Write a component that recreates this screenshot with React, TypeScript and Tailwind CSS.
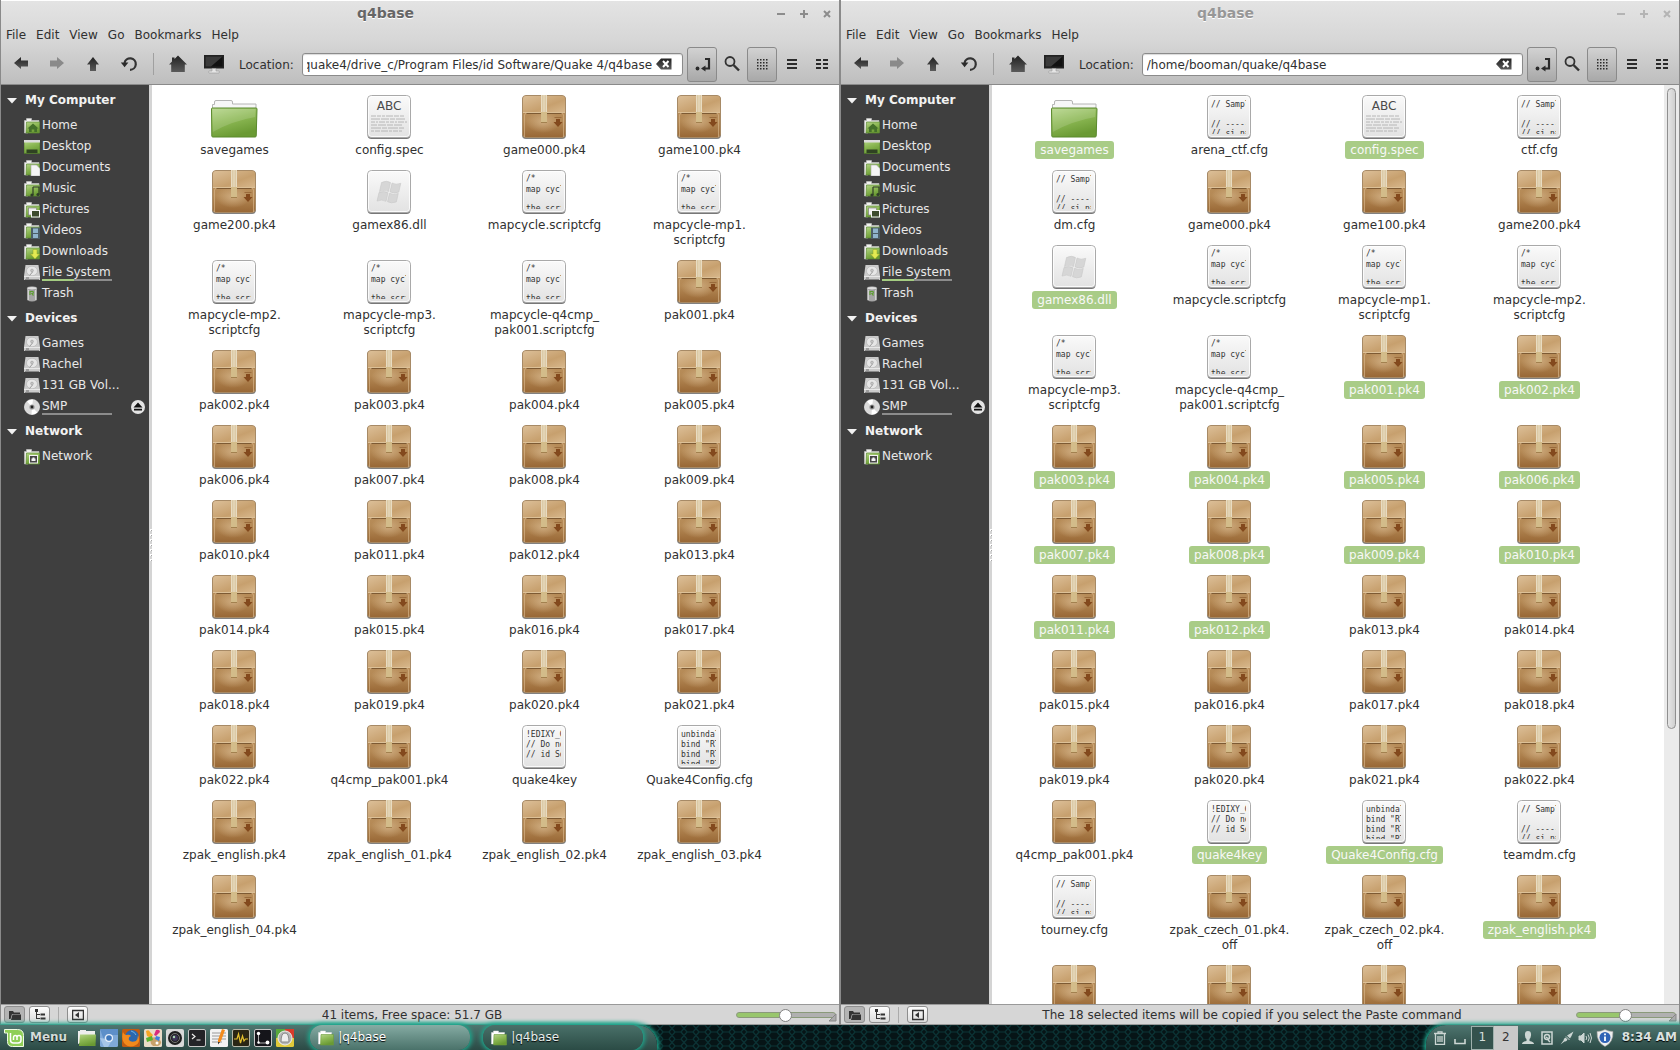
import { useId, type ReactNode } from "react";

type Kind = "pk4" | "folder" | "spec" | "dll" | "map" | "cfg" | "key" | "qcfg";
type FileItem = { name: string; kind: Kind; selected?: boolean };

const pk4 = (name: string, selected = false): FileItem => ({ name, kind: "pk4", selected });
const f = (name: string, kind: Kind, selected = false): FileItem => ({ name, kind, selected });

const leftFiles: FileItem[] = [
  f("savegames", "folder"), f("config.spec", "spec"), pk4("game000.pk4"), pk4("game100.pk4"),
  pk4("game200.pk4"), f("gamex86.dll", "dll"), f("mapcycle.scriptcfg", "map"), f("mapcycle-mp1.\nscriptcfg", "map"),
  f("mapcycle-mp2.\nscriptcfg", "map"), f("mapcycle-mp3.\nscriptcfg", "map"), f("mapcycle-q4cmp_\npak001.scriptcfg", "map"), pk4("pak001.pk4"),
  pk4("pak002.pk4"), pk4("pak003.pk4"), pk4("pak004.pk4"), pk4("pak005.pk4"),
  pk4("pak006.pk4"), pk4("pak007.pk4"), pk4("pak008.pk4"), pk4("pak009.pk4"),
  pk4("pak010.pk4"), pk4("pak011.pk4"), pk4("pak012.pk4"), pk4("pak013.pk4"),
  pk4("pak014.pk4"), pk4("pak015.pk4"), pk4("pak016.pk4"), pk4("pak017.pk4"),
  pk4("pak018.pk4"), pk4("pak019.pk4"), pk4("pak020.pk4"), pk4("pak021.pk4"),
  pk4("pak022.pk4"), pk4("q4cmp_pak001.pk4"), f("quake4key", "key"), f("Quake4Config.cfg", "qcfg"),
  pk4("zpak_english.pk4"), pk4("zpak_english_01.pk4"), pk4("zpak_english_02.pk4"), pk4("zpak_english_03.pk4"),
  pk4("zpak_english_04.pk4"),
];

const rightFiles: FileItem[] = [
  f("savegames", "folder", true), f("arena_ctf.cfg", "cfg"), f("config.spec", "spec", true), f("ctf.cfg", "cfg"),
  f("dm.cfg", "cfg"), pk4("game000.pk4"), pk4("game100.pk4"), pk4("game200.pk4"),
  f("gamex86.dll", "dll", true), f("mapcycle.scriptcfg", "map"), f("mapcycle-mp1.\nscriptcfg", "map"), f("mapcycle-mp2.\nscriptcfg", "map"),
  f("mapcycle-mp3.\nscriptcfg", "map"), f("mapcycle-q4cmp_\npak001.scriptcfg", "map"), pk4("pak001.pk4", true), pk4("pak002.pk4", true),
  pk4("pak003.pk4", true), pk4("pak004.pk4", true), pk4("pak005.pk4", true), pk4("pak006.pk4", true),
  pk4("pak007.pk4", true), pk4("pak008.pk4", true), pk4("pak009.pk4", true), pk4("pak010.pk4", true),
  pk4("pak011.pk4", true), pk4("pak012.pk4", true), pk4("pak013.pk4"), pk4("pak014.pk4"),
  pk4("pak015.pk4"), pk4("pak016.pk4"), pk4("pak017.pk4"), pk4("pak018.pk4"),
  pk4("pak019.pk4"), pk4("pak020.pk4"), pk4("pak021.pk4"), pk4("pak022.pk4"),
  pk4("q4cmp_pak001.pk4"), f("quake4key", "key", true), f("Quake4Config.cfg", "qcfg", true), f("teamdm.cfg", "cfg"),
  f("tourney.cfg", "cfg"), pk4("zpak_czech_01.pk4.\noff"), pk4("zpak_czech_02.pk4.\noff"), pk4("zpak_english.pk4", true),
  pk4("zpak_english_01.pk4"), pk4("zpak_english_02.pk4"), pk4("zpak_english_03.pk4"), pk4("zpak_english_04.pk4"),
];

/* ---------- file icons ---------- */

function PackageIcon() {
  return (
    <svg className="mr-px block h-11 w-11 shrink-0" viewBox="0 0 44 44" aria-hidden="true">
      <use href="#box" />
    </svg>
  );
}

function FolderIcon() {
  return (
    <svg className="mr-px block h-11 w-11 shrink-0 overflow-visible" viewBox="0 0 44 44" aria-hidden="true">
      <path d="M.5 40V9.500h2V7q0-1.500 1.500-1.500h15q1.500 0 1.500 1.500v2H44V40Z" fill="#f7f7f7" stroke="#b5b5b5" />
      <path d="M-.5 14q0-1 1-1h43.500q1 0 1 1l-.8 27q-.1 1-1 1H.8q-1 0-1-1Z" fill="url(#folderG)" stroke="#5b8a2d" />
      <path d="M.5 14h43l-.3 8Q20 26 .8 37Z" fill="#fff" opacity=".14" />
    </svg>
  );
}

function SheetIcon({ children }: { children?: ReactNode }) {
  return (
    <svg className="mr-px block h-11 w-11 shrink-0" viewBox="0 0 44 44" aria-hidden="true">
      <rect x=".5" y="1.500" width="43" height="42.500" rx="4" fill="#555" opacity=".8" />
      <rect x=".5" y=".5" width="43" height="42" rx="4" fill="url(#sheetG)" stroke="#a9a9a9" />
      <rect x="1.500" y="1.500" width="41" height="40" rx="3" fill="none" stroke="#fff" opacity=".8" />
      {children}
    </svg>
  );
}

const previews: Record<string, { text: string; y: number }[]> = {
  map: [{ text: "/*", y: 11 }, { text: "map cycle", y: 22 }, { text: "the scri", y: 41 }],
  cfg: [{ text: "// Sample", y: 12 }, { text: "// -----", y: 32 }, { text: "// si_nam", y: 41 }],
  key: [{ text: "!EDIXY_G", y: 12 }, { text: "// Do not", y: 22 }, { text: "// id Sof", y: 32 }],
  qcfg: [{ text: "unbindall", y: 12 }, { text: 'bind "RT', y: 22 }, { text: 'bind "RT', y: 32 }, { text: 'bind "RT', y: 42 }],
};

function PreviewIcon({ kind }: { kind: string }) {
  return (
    <SheetIcon>
      <g clipPath="url(#previewClip)" fontFamily="DejaVu Sans Mono" fontSize="8" fill="#333">
        {previews[kind].map((l) => (
          <text key={l.y} x="4" y={l.y}>{l.text}</text>
        ))}
      </g>
    </SheetIcon>
  );
}

function FileIcon({ kind }: { kind: Kind }) {
  if (kind === "pk4") return <PackageIcon />;
  if (kind === "folder") return <FolderIcon />;
  if (kind === "spec")
    return (
      <SheetIcon>
        <text x="22" y="15" textAnchor="middle" fontFamily="DejaVu Sans" fontSize="12" fill="#4a4a4a">ABC</text>
        <g stroke="#a8a8a8" strokeWidth=".8">
          <path d="M4 21h34" strokeDasharray="5 1 4 1 3 1 7 1" />
          <path d="M4 24h34" strokeDasharray="9 1 8 1 5 1" />
          <path d="M4 27h36" strokeDasharray="4 1 2 1 6 1 3 1" />
          <path d="M4 30h32" strokeDasharray="6 1 8 1" />
          <path d="M4 33h33" strokeDasharray="10 1 5 1" />
          <path d="M4 36h31" strokeDasharray="3 1 5 1 7 1" />
        </g>
      </SheetIcon>
    );
  if (kind === "dll")
    return (
      <SheetIcon>
        <g fill="#d6d6d6" stroke="#c3c3c3" strokeWidth=".5">
          <path d="M14.500 12.500q5-2.500 9 0l-2 9q-4-2.300-9 0Z" />
          <path d="M25 13q4 2.200 8.800.3l-2 8.800q-5 2-8.800-.3Z" />
          <path d="M12 22.500q5-2 9 .3l-2 8.500q-4-2.300-9-.2Z" />
          <path d="M22.500 23.300q4 2.200 8.800.2l-2 8.500q-5 1.800-8.800-.3Z" />
        </g>
      </SheetIcon>
    );
  return <PreviewIcon kind={kind} />;
}

function SharedDefs() {
  return (
    <svg className="absolute h-0 w-0" aria-hidden="true">
      <defs>
        <linearGradient id="boxTop" x1="0" y1="0" x2="1" y2="1">
          <stop offset="0" stopColor="#dcbf98" /><stop offset=".6" stopColor="#c7a06e" /><stop offset="1" stopColor="#d8b88d" />
        </linearGradient>
        <linearGradient id="boxFront" x1="0" y1="0" x2="0" y2="1">
          <stop offset="0" stopColor="#b98f5e" /><stop offset=".6" stopColor="#b58a56" /><stop offset="1" stopColor="#986735" />
        </linearGradient>
        <radialGradient id="boxGlow"><stop offset="0" stopColor="#d6b68c" stopOpacity=".75" /><stop offset="1" stopColor="#d6b68c" stopOpacity="0" /></radialGradient>
        <linearGradient id="folderG" x1="0" y1="0" x2=".4" y2="1">
          <stop offset="0" stopColor="#b4d488" /><stop offset=".5" stopColor="#8cb854" /><stop offset="1" stopColor="#6a9a33" />
        </linearGradient>
        <linearGradient id="sheetG" x1="0" y1="0" x2="0" y2="1"><stop offset="0" stopColor="#fafafa" /><stop offset="1" stopColor="#e2e2e2" /></linearGradient>
        <linearGradient id="darkG" x1="0" y1="0" x2="0" y2="1"><stop offset="0" stopColor="#222" /><stop offset="1" stopColor="#5a5a5a" /></linearGradient>
        <clipPath id="previewClip"><rect x="3" y="3" width="36" height="36" /></clipPath>
        <g id="box">
          <rect x="0" y="1" width="44" height="43" rx="4" fill="#6b6b6b" opacity=".85" />
          <rect x=".5" y=".5" width="43" height="42" rx="3.500" fill="url(#boxFront)" stroke="#a78a66" />
          <ellipse cx="21" cy="27" rx="17" ry="11" fill="url(#boxGlow)" />
          <path d="M1 17.500V4q0-3 3-3h36q3 0 3 3v13.500Z" fill="url(#boxTop)" />
          <path d="M1 17.500h42" stroke="#dcc097" />
          <path d="M4 18.500h36" stroke="#7d5a33" />
          <path d="M2.500 42V20q0-1.500 2-1.500M41.500 42V20q0-1.500-2-1.500" stroke="#d6b487" fill="none" opacity=".7" />
          <path d="M19 0h6v18h-6Z" fill="#dccaa6" /><path d="M19.500 0v17M24.500 0v17M22 0v17" stroke="#eee4cf" opacity=".7" />
          <path d="M19 17h6v10h-6Z" fill="#d3bc8a" /><path d="M19 27.500h6" stroke="#a3814f" />
          <path d="M34 24h4v3h2.500L36 32l-4.500-5H34Z" fill="#83491d" /><path d="M32.500 22.500h7" stroke="#9a6b3c" />
        </g>
      </defs>
    </svg>
  );
}

/* ---------- sidebar ---------- */

function MiniFolder({ children }: { children?: ReactNode }) {
  return (
    <svg className="h-4 w-4 shrink-0" viewBox="0 0 16 16" aria-hidden="true">
      <path d="M.5 15V2.500h2v-2h5v2h7.500V6H4v9Z" fill="#f1f1ee" stroke="#c8c8c8" strokeWidth=".6" />
      <path d="M2.500 4h13.200v10.500q0 .5-.5.5H2Z" fill="url(#folderG)" stroke="#5c8a34" strokeWidth=".7" />
      {children}
    </svg>
  );
}

const disk = (
  <svg className="h-4 w-4 shrink-0" viewBox="0 0 16 16" aria-hidden="true">
    <path d="M1.500 0h13L16 11v4H0v-4Z" fill="#cbcbcb" />
    <ellipse cx="8" cy="6" rx="5.500" ry="4.800" fill="#e6e6e6" stroke="#b0b0b0" strokeWidth=".6" />
    <circle cx="8" cy="5.500" r="1.400" fill="#c4c4c4" stroke="#999" strokeWidth=".5" />
    <path d="M8.500 7l-3 3.500" stroke="#9a9a9a" />
    <path d="M0 11.500h16" stroke="#efefef" strokeWidth=".8" />
    <path d="M1 14.500h14" stroke="#777" strokeWidth=".8" /><path d="M2 13h3" stroke="#555" strokeWidth=".8" />
  </svg>
);

const sidebarIcons: Record<string, ReactNode> = {
  Home: <MiniFolder><path d="M9 5.500l5.500 5H13V14h-2.700v-2.500H7.700V14H5v-3.500H3.500Z" fill="#43702a" /></MiniFolder>,
  Desktop: (
    <svg className="h-4 w-4 shrink-0" viewBox="0 0 16 16" aria-hidden="true">
      <path d="M0 1.500h16v13H0Z" fill="url(#folderG)" stroke="#4d752d" strokeWidth=".7" />
      <path d="M0 1h16v2.500H0Z" fill="#dcdcdc" /><path d="M2.500 10.500h11V14h-11Z" fill="#2f4222" />
    </svg>
  ),
  Documents: <MiniFolder><path d="M7 5h5.500L16 8.500V16H7Z" fill="#f5f5f5" stroke="#aaa" strokeWidth=".6" /></MiniFolder>,
  Music: <MiniFolder><path d="M9 6h6v7.500M9 6v8" stroke="#2f3d28" strokeWidth="1.200" fill="none" /><circle cx="8" cy="14" r="1.600" fill="#2f3d28" /><circle cx="14" cy="13.500" r="1.600" fill="#2f3d28" /></MiniFolder>,
  Pictures: <MiniFolder><rect x="4.500" y="6" width="8" height="7" fill="#eee" stroke="#777" strokeWidth=".6" /><rect x="7.500" y="8.500" width="8" height="6.500" fill="#3b4a2c" stroke="#f4f4f4" /></MiniFolder>,
  Videos: <MiniFolder><path d="M7 4.500h9V16H7Z" fill="#4b5d66" /><path d="M9 5.500h5V10H9ZM9 11h5v4H9Z" fill="#8fb4cb" /></MiniFolder>,
  Downloads: <MiniFolder><path d="M9 5.500h4V10h2.500L11 15 6.500 10H9Z" fill="#e2ea52" stroke="#93a424" strokeWidth=".5" /></MiniFolder>,
  "File System": disk,
  Trash: (
    <svg className="h-4 w-4 shrink-0" viewBox="0 0 16 16" aria-hidden="true">
      <path d="M3 2h10v12q-5 3-10 0Z" fill="#a5a5a5" /><path d="M4.500 3v11M11.500 3v11" stroke="#d2d2d2" />
      <ellipse cx="8" cy="2.200" rx="5" ry="1.700" fill="#ddd" stroke="#777" strokeWidth=".5" />
      <path d="M6 9V5.500h3q1 1.800-1 2.200l1.500 1.800" stroke="#5d9c2f" fill="none" strokeWidth="1.200" />
    </svg>
  ),
  SMP: (
    <svg className="h-4 w-4 shrink-0" viewBox="0 0 16 16" aria-hidden="true">
      <circle cx="8" cy="8" r="7.600" fill="#dadada" stroke="#f6f6f6" strokeWidth=".6" />
      <path d="M8 8 3 2.500Q6 .2 9 .8ZM8 8l5.500 5.500Q11 15.500 7.500 15.500Z" fill="#fff" />
      <circle cx="8" cy="8" r="2.600" fill="#999" /><circle cx="8" cy="8" r="1.400" fill="#222" />
    </svg>
  ),
  Network: <MiniFolder><rect x="5.500" y="6.500" width="8" height="7.500" fill="#444" stroke="#f3f3f3" /><path d="M7.500 12V9.500h1v-1h2v1h1V12Z" fill="#f3f3f3" /></MiniFolder>,
};

const sections: { title: string; items: { label: string; usage?: number; eject?: boolean }[] }[] = [
  {
    title: "My Computer",
    items: [
      { label: "Home" }, { label: "Desktop" }, { label: "Documents" }, { label: "Music" }, { label: "Pictures" },
      { label: "Videos" }, { label: "Downloads" }, { label: "File System", usage: 45 }, { label: "Trash" },
    ],
  },
  { title: "Devices", items: [{ label: "Games" }, { label: "Rachel" }, { label: "131 GB Vol..." }, { label: "SMP", usage: 0, eject: true }] },
  { title: "Network", items: [{ label: "Network" }] },
];

function Sidebar() {
  return (
    <nav className="w-37 shrink-0 overflow-hidden bg-[#3f3f3f] pt-px text-[#e8e8e8]" aria-label="Places">
      {sections.map((s) => (
        <section key={s.title}>
          <h2 className="flex h-[29px] items-center pl-1.5 font-bold text-[#f2f2f2]">
            <svg className="mr-2 h-[6px] w-2.5" viewBox="0 0 10 6" aria-hidden="true"><path d="M0 0h10L5 5.500Z" fill="#f2f2f2" /></svg>
            {s.title}
          </h2>
          <ul>
            {s.items.map((it) => (
              <li key={it.label} className="flex h-[21px] items-center pr-1 pl-[23px]">
                {sidebarIcons[it.label] ?? disk}
                <a href="#" className="relative ml-0.5 flex h-[21px] w-[70px] items-center whitespace-nowrap">
                  {it.label}
                  {it.usage !== undefined && (
                    <span className="absolute bottom-0.5 left-0 h-0.5 w-full bg-[#8c8c8c]">
                      <span className="block h-full bg-[#a5cd82]" style={{ width: `${it.usage}%` }} />
                    </span>
                  )}
                </a>
                {it.eject && (
                  <button type="button" aria-label="Eject" className="ml-auto">
                    <svg className="block h-3.5 w-3.5" viewBox="0 0 14 14" aria-hidden="true">
                      <circle cx="7" cy="7" r="7" fill="#e4e4e4" /><path d="M7 2.500 11.500 7.500h-9ZM3 8.700h8v1.900H3Z" fill="#111" />
                    </svg>
                  </button>
                )}
              </li>
            ))}
          </ul>
        </section>
      ))}
    </nav>
  );
}

/* ---------- window chrome ---------- */

function Tool({ label, children, wide, pressed }: { label: string; children: ReactNode; wide?: boolean; pressed?: boolean }) {
  return (
    <button
      type="button"
      aria-label={label}
      className={`flex h-[35px] shrink-0 items-center justify-center rounded-[3px] ${wide ? "w-9" : "w-[30px]"} ${
        pressed ? "border border-[#8a8a8a] bg-linear-to-b from-[#d2d2d2] to-[#a8a8a8]" : ""
      }`}
    >
      {children}
    </button>
  );
}

function Glyph({ children }: { children: ReactNode }) {
  return <svg className="block h-5 w-5 shrink-0" viewBox="0 0 20 20" fill="#2b2b2b" aria-hidden="true">{children}</svg>;
}

const dots = [5, 8, 11, 14].flatMap((y) => [5, 8, 11, 14].map((x) => `M${x} ${y}h1.500v1.500h-1.500Z`)).join("");

const scrollToEnd = (el: HTMLInputElement | null) => {
  if (el) el.scrollLeft = el.scrollWidth;
};

function Toolbar({ path }: { path: string }) {
  const id = useId();
  return (
    <div className="flex h-[38px] items-center px-0.5">
      <Tool label="Back" wide><Glyph><path d="M3 9 10 3v3.500h7v6h-7V15Z" fill="url(#darkG)" /></Glyph></Tool>
      <Tool label="Forward" wide><Glyph><path d="M17 9 10 3v3.500H3v6h7V15Z" fill="#8a8a8a" /></Glyph></Tool>
      <Tool label="Up" wide><Glyph><path d="M10 3l6 7.500h-3V17H7v-6.500H4Z" fill="url(#darkG)" /></Glyph></Tool>
      <Tool label="Reload" wide><Glyph><path d="M5.500 9A5.700 5.700 0 1 1 11 15.800" fill="none" stroke="#333" strokeWidth="2.200" /><path d="M1.800 8.500h7.600L5.600 13.300Z" /></Glyph></Tool>
      <span className="mx-1.5 h-[22px] w-px bg-[#a0a0a0]" />
      <Tool label="Home" wide><Glyph><path d="M10 1.500 19 10.500h-2.200V18H3.200v-7.500H1L4 7.600V3.500h2.500v1.600Z" fill="url(#darkG)" /></Glyph></Tool>
      <Tool label="Computer" wide>
        <Glyph><path d="M0 1h20v13.500H0Z" fill="#222" /><path d="M1.500 2.500h17v10h-17Z" fill="#111" /><path d="M1.500 2.500h17L7 12.500H1.500Z" fill="#3a3a3a" /><path d="M8 14.500h4v2.500h3q1 1 0 2H5q-1-1 0-2h3Z" fill="#e5e5e5" stroke="#999" strokeWidth=".6" /></Glyph>
      </Tool>
      <label htmlFor={id} className="ml-[7px] shrink-0 pt-0.5">Location:</label>
      <div className="ml-2 flex h-[23px] min-w-0 flex-1 items-center rounded-[3px] border border-[#8b8b8b] bg-white pr-2.5 pl-1 shadow-[inset_0_1px_1px_rgba(0,0,0,0.15)]">
        <input
          id={id}
          ref={scrollToEnd}
          readOnly
          value={path}
          className="h-full min-w-0 flex-1 bg-transparent pt-0.5 text-[#303030] outline-none"
        />
        <button type="button" aria-label="Clear location" className="ml-1">
          <svg className="block h-3 w-4" viewBox="0 0 16 12" aria-hidden="true">
            <path d="M0 6 5 .5h10.500v11H5Z" fill="url(#darkG)" /><path d="m7 3 5.500 6M12.500 3 7 9" stroke="#fff" strokeWidth="2" />
          </svg>
        </button>
      </div>
      <div className="ml-1 flex shrink-0">
        <Tool label="Toggle location entry" pressed><Glyph><path d="M13 5h4v9.500h-4" fill="none" stroke="#2b2b2b" strokeWidth="2.200" /><path d="M13.500 11.500v6l-4.500-3Z" /><circle cx="5.500" cy="14.500" r="1.900" /></Glyph></Tool>
        <Tool label="Search"><Glyph><circle cx="8" cy="7.500" r="4.500" fill="none" stroke="#333" strokeWidth="1.800" /><path d="m11.500 11 5.500 5.500" stroke="#333" strokeWidth="2.400" /></Glyph></Tool>
        <Tool label="Icon view" pressed><Glyph><path d={dots} /></Glyph></Tool>
        <Tool label="List view"><Glyph><path d="M5 5h10v2H5ZM5 9h10v2H5ZM5 13h10v2H5Z" /></Glyph></Tool>
        <Tool label="Compact view"><Glyph><path d="M4 5h5v2H4ZM4 9h5v2H4ZM4 13h5v2H4ZM11 5h5v2h-5ZM11 9h5v2h-5ZM11 13h5v2h-5Z" /></Glyph></Tool>
      </div>
    </div>
  );
}

function StatusButton({ label, pressed, children }: { label: string; pressed?: boolean; children: ReactNode }) {
  return (
    <button
      type="button"
      aria-label={label}
      className={`flex h-[17px] w-[21px] items-center justify-center rounded-[3px] border border-[#8e8e8e] ${
        pressed ? "bg-[#b4b4b4]" : "bg-linear-to-b from-[#fdfdfd] to-[#dcdcdc]"
      }`}
    >
      <svg className="h-3 w-3" viewBox="0 0 12 12" fill="#333" aria-hidden="true">{children}</svg>
    </button>
  );
}

function StatusBar({ text }: { text: string }) {
  return (
    <footer className="relative flex h-[21px] shrink-0 items-center border-t border-b border-[#999] bg-[#d6d6d6] pr-[3px] pl-[3px]">
      <StatusButton label="Places" pressed><path d="M0 2h4l1 1.500h6V5H3L1.500 10H0Z" /><path d="M3.500 5.500H12V11H2Z" /></StatusButton>
      <span className="w-1" />
      <StatusButton label="Tree"><path d="M1 0h3v3H3v2h3v1H3v3h3v1H2V3H1ZM6.500 4.500h4.500v2H6.500ZM6.500 8.500h5v2h-5Z" /></StatusButton>
      <span className="mx-2 h-4 w-px bg-[#aaa]" />
      <StatusButton label="Hide sidebar"><path d="M.5 1.500h11v9H.5Z" fill="none" stroke="#333" strokeWidth="1.500" /><path d="M7 3v6L3 6Z" /></StatusButton>
      <p className="flex-1 truncate pt-0.5 text-center leading-[17px]">{text}</p>
      <input
        type="range"
        aria-label="Zoom"
        defaultValue={49}
        className="h-[13px] w-25 appearance-none bg-transparent [&::-webkit-slider-runnable-track]:h-1.5 [&::-webkit-slider-runnable-track]:rounded-full [&::-webkit-slider-runnable-track]:border [&::-webkit-slider-runnable-track]:border-[#8a9a7a] [&::-webkit-slider-runnable-track]:bg-[linear-gradient(to_right,#98c66c_50%,#b0b0b0_50%)] [&::-webkit-slider-thumb]:-mt-1 [&::-webkit-slider-thumb]:h-[13px] [&::-webkit-slider-thumb]:w-[13px] [&::-webkit-slider-thumb]:appearance-none [&::-webkit-slider-thumb]:rounded-full [&::-webkit-slider-thumb]:border [&::-webkit-slider-thumb]:border-[#808080] [&::-webkit-slider-thumb]:bg-white"
      />
      <svg className="absolute right-0.5 bottom-0.5 h-2 w-2" viewBox="0 0 8 8" aria-hidden="true"><path d="M7 0v7H0Z" fill="#aaa" stroke="#888" /></svg>
    </footer>
  );
}

type WindowProps = { path: string; inactive?: boolean; files: FileItem[]; status: string; scrollbar?: boolean };

function FileWindow({ path, inactive, files, status, scrollbar }: WindowProps) {
  return (
    <section className="flex min-w-0 flex-1 flex-col border-x border-[#8a8a8a]" aria-label="q4base">
      <header className="shrink-0 border-b border-[#8a8a8a] bg-linear-to-b from-[#e4e4e4] via-[#d6d6d6] to-[#bebebe]">
        <div className="flex h-[26px] items-center border-t border-white pr-[7px]">
          <h1 className={`flex-1 pr-1.5 text-center text-[14px] font-bold [text-shadow:0_1px_0_#fff] ${inactive ? "text-[#979797]" : "text-[#666]"}`}>
            q4base
          </h1>
          <div className={`flex gap-[13px] ${inactive ? "text-[#b4b4b4]" : "text-[#8c8c8c]"}`}>
            {[["Minimize", "M1 5h8"], ["Maximize", "M1 5h8M5 1v8"], ["Close", "m2 2 6 6M8 2 2 8"]].map(([label, d]) => (
              <button key={label} type="button" aria-label={label}>
                <svg className="block h-2.5 w-2.5" viewBox="0 0 10 10" aria-hidden="true"><path d={d} stroke="currentColor" strokeWidth="2" fill="none" /></svg>
              </button>
            ))}
          </div>
        </div>
        <nav className="flex h-[19px] items-center gap-2.5 pl-[5px]" aria-label="Menu bar">
          {["File", "Edit", "View", "Go", "Bookmarks", "Help"].map((m) => (
            <button key={m} type="button">{m}</button>
          ))}
        </nav>
        <div className="pb-px">
          <Toolbar path={path} />
        </div>
      </header>
      <div className="flex min-h-0 flex-1">
        <Sidebar />
        <div className="flex w-[3px] shrink-0 flex-col items-end justify-center gap-[3px] bg-[#d4d4d4]">
          {Array.from({ length: 7 }, (_, i) => <span key={i} className="h-0.5 w-0.5 border-t border-l border-white bg-[#a5a5a5]" />)}
        </div>
        <main className="min-w-0 flex-1 overflow-hidden bg-white pt-2.5 pl-[5px]">
          <ul className="grid grid-cols-[repeat(auto-fill,155px)]">
            {files.map((file) => (
              <li key={file.name} className="flex flex-col items-center pb-[11px]">
                <FileIcon kind={file.kind} />
                <span
                  className={`mt-0.5 rounded-[3px] px-[5px] pt-0.5 pb-px text-center leading-[15px] whitespace-pre ${
                    file.selected ? "bg-[#a9cc87] text-[#f8f8f8]" : "text-[#303030]"
                  }`}
                >
                  {file.name}
                </span>
              </li>
            ))}
          </ul>
        </main>
        {scrollbar && (
          <div className="w-[15px] shrink-0 bg-[#ebebeb] px-[3px] pt-[3px]">
            <div className="h-[70%] rounded-full border border-[#8f8f8f] bg-linear-to-r from-[#e6e6e6] to-[#cfcfcf]" />
          </div>
        )}
      </div>
      <StatusBar text={status} />
    </section>
  );
}

/* ---------- taskbar ---------- */

function Launcher({ label, children }: { label: string; children: ReactNode }) {
  return (
    <button type="button" aria-label={label} className="w-[18px] shrink-0">
      <svg className="block h-[18px] w-[18px]" viewBox="0 0 18 18" aria-hidden="true">{children}</svg>
    </button>
  );
}

function TaskFolder() {
  return (
    <svg className="h-4 w-4 shrink-0" viewBox="0 0 16 16" aria-hidden="true">
      <path d="M.5 14V2.500h2V1h5v1.500h6V6H4v8Z" fill="#fff" stroke="#ddd" strokeWidth=".5" />
      <path d="M3 4.500h12.500V15H2.500Z" fill="url(#folderG)" stroke="#6b9a3a" strokeWidth=".6" />
    </svg>
  );
}

function Taskbar() {
  return (
    <div className="relative flex h-[25px] shrink-0 items-stretch justify-between bg-[#061416] text-[#d6dedb]">
      <svg className="absolute inset-0 h-full w-full" aria-hidden="true">
        <defs>
          <pattern id="hex" width="12" height="14" patternUnits="userSpaceOnUse">
            <path d="M0 3.500 3 0h6l3 3.500M0 3.500 3 7h6l3-3.500M3 7 0 10.500 3 14M9 7l3 3.500L9 14" fill="none" stroke="#0b3335" strokeWidth="1.200" />
          </pattern>
        </defs>
        <rect width="100%" height="100%" fill="url(#hex)" />
      </svg>
      <div className="relative flex items-center rounded-tr-[20px] bg-linear-to-b from-[#4f7670] to-[#2b4a45] pr-3.5 pl-1 shadow-[0_0_4px_2px_#1ea68c]">
        <button type="button" className="flex items-center gap-1.5 font-bold text-[#d4dcd9] [text-shadow:0_1px_1px_#000]">
          <svg className="h-[18px] w-5" viewBox="0 0 20 18" aria-hidden="true">
            <path d="M.5.500h13q6 0 6 6V17.500h-11q-5 0-5-5V4h-3Z" fill="#8fcf57" stroke="#effbe4" />
            <path d="M6.500 4v7q0 3 3 3h4.500q3 0 3-3V8.500q0-2-2-2t-2 2V11M13 8.500q0-2-1.700-2t-1.800 2V11" fill="none" stroke="#fff" strokeWidth="1.500" />
          </svg>
          Menu
        </button>
        <div className="ml-[11px] flex gap-1">
          <Launcher label="Files"><path d="M0 15V2h2V1h6v1h9v4Z" fill="#eee" /><path d="M2 5.500h16L17.500 17H1Z" fill="url(#folderG)" /></Launcher>
          <Launcher label="Chromium"><rect width="18" height="18" rx="1.500" fill="#7fa9d8" /><path d="M0 0h18v6H9Q4 6 3.500 10Z" fill="#5d8fc9" /><path d="M12 11 8 18H4L0 9Z" fill="#a6c6e8" /><circle cx="9" cy="9" r="4" fill="#e9f1fa" /><circle cx="9" cy="9" r="2.800" fill="#3f78bd" /></Launcher>
          <Launcher label="Firefox"><rect width="18" height="18" rx="1.500" fill="#c05c12" /><circle cx="10" cy="8" r="7" fill="#2a67ae" /><path d="M1 3q1 3 3 3 4-1 5 1-3 1-2 4 2 3 7 1 2-2 2-6 3 7-2 10-7 4-12-2Q-1 9 1 3Z" fill="#f28a1c" /><path d="M9 2q4 1 5 4" stroke="#6fb3e5" fill="none" /></Launcher>
          <Launcher label="Paint"><rect width="18" height="18" rx="1.500" fill="#e9dcc8" /><path d="M7 9q6-2 9 2t-2 6H9q-4-3-2-8Z" fill="#c9a26b" /><path d="M2 2q3-2 4 1l3 3-2 3-4-2Z" fill="#f5a623" /><path d="M10 6 12 1q4-1 4 2l-4 4Z" fill="#d92c7c" /><path d="M2 9l6-2 1 4-6 2Z" fill="#59b22e" /><path d="m12 7 4 1-1 4-4-2Z" fill="#3e7fe0" /><circle cx="13" cy="14" r="1.500" fill="#fff" /></Launcher>
          <Launcher label="Camera"><rect width="18" height="18" rx="2" fill="#d9d9d9" /><circle cx="9" cy="9" r="7" fill="#1e1e1e" /><circle cx="9" cy="9" r="4.500" fill="none" stroke="#777" /><circle cx="9" cy="9" r="3" fill="#3e3558" /><circle cx="8" cy="8" r="1.200" fill="#a9d9b0" /></Launcher>
          <Launcher label="Terminal"><rect x=".5" y=".5" width="17" height="17" rx="1.500" fill="#232327" stroke="#c7c7c7" /><path d="m4 5 3 2.500L4 10M8.500 11h4" stroke="#eee" fill="none" strokeWidth="1.200" /></Launcher>
          <Launcher label="Text editor"><rect width="18" height="18" rx="1.500" fill="#f3f3f3" /><path d="M2 4h14M2 7h14M2 10h14M2 13h10" stroke="#999" /><path d="m12 0 3 1-4 11-3 3v-4Z" fill="#f28c1e" /><path d="m8 13v2.500L10 13Z" fill="#333" /></Launcher>
          <Launcher label="System monitor"><rect x=".5" y=".5" width="17" height="17" rx="1.500" fill="#2a2514" stroke="#b7b7a8" /><path d="M2 10h3l1.500-5 2 9 2-7 1.500 5 1.500-2H16" stroke="#e4bf2c" fill="none" strokeWidth="1.200" /></Launcher>
          <Launcher label="Resolution"><rect x=".5" y=".5" width="17" height="17" rx="1.500" fill="#15151a" stroke="#c7c7c7" /><path d="M4.500 4v10h9" stroke="#aaa" fill="none" /><circle cx="4.500" cy="4.500" r="1.700" fill="#fff" /><circle cx="4.500" cy="13.500" r="1.200" fill="#fff" /><circle cx="13.500" cy="13.500" r="1.900" fill="#fff" /></Launcher>
          <Launcher label="Mixer"><rect width="18" height="18" rx="1.500" fill="#e1c93a" /><path d="M0 0h9v9H0Z" fill="#59a83b" /><path d="M9 0h9v9H9Z" fill="#d93b2b" /><circle cx="9" cy="9" r="7" fill="#b4b4b4" stroke="#eee" /><path d="M5 13q0-9 4-9t4 9Z" fill="#eee" stroke="#888" /></Launcher>
        </div>
        <div className="ml-4 flex h-full gap-[13px]">
          <button type="button" className="flex w-40 items-center gap-1 rounded-xl bg-linear-to-b from-[#86aca4] to-[#4a726a] pl-2 text-white shadow-[0_0_4px_2px_#1ea68c] [text-shadow:0_1px_1px_#000]">
            <TaskFolder /><span>|q4base</span>
          </button>
          <button type="button" className="flex w-40 items-center gap-1 rounded-xl bg-linear-to-b from-[#4a716a] to-[#2b4b45] pl-2 text-[#e6eeec] shadow-[0_0_4px_2px_#1ea68c] [text-shadow:0_1px_1px_#000]">
            <TaskFolder /><span>|q4base</span>
          </button>
        </div>
      </div>
      <div className="relative flex items-center rounded-tl-[20px] bg-linear-to-b from-[#4f7670] to-[#2b4a45] pr-[3px] pl-2 shadow-[0_0_4px_2px_#1ea68c]">
        <svg className="h-3.5 w-3" viewBox="0 0 12 14" fill="none" stroke="#ccd6d3" strokeWidth="1.300" aria-hidden="true"><path d="M0 2.500h12M4 2V.800h4V2M1.500 2.500v10.800h9V2.500M4 5v6M6 5v6M8 5v6" /></svg>
        <svg className="ml-2 h-3.5 w-3" viewBox="0 0 12 14" fill="none" stroke="#ccd6d3" strokeWidth="1.600" aria-hidden="true"><path d="M1 8v4.500h10V8" /></svg>
        <button type="button" className="ml-[5px] h-6 w-[23px] border border-[#9fb0ac] bg-[#34524d]">1</button>
        <button type="button" className="h-6 w-6 bg-[#c9c9c9] text-[#333]">2</button>
        <svg className="ml-1 h-3.5 w-3" viewBox="0 0 12 14" fill="#ccd6d3" aria-hidden="true"><path d="M6 0q3.500 0 3 4.500-.3 2.500-1.500 3.500v2Q12 11 12 13H0q0-2 4.500-3V8Q3 7 3 4.500 2.500 0 6 0Z" /></svg>
        <svg className="ml-[7px] h-3.5 w-3" viewBox="0 0 12 14" fill="none" stroke="#ccd6d3" strokeWidth="1.500" aria-hidden="true"><path d="M1 1h10v12H1Z" /><circle cx="6" cy="6" r="2.500" /><path d="m5 6 2 1.500M7 9l2 2" /></svg>
        <svg className="ml-[7px] h-3.5 w-3.5" viewBox="0 0 14 14" fill="#ccd6d3" aria-hidden="true"><path d="m.5 13.500 3-4q0-2 2-3l2 2q-1 2.500-3 2ZM7 4.500 9.500 3 13.500.500 11.500 5 10 7.500Z" /><path d="m6 5.500 3.500 3.500" stroke="#ccd6d3" /></svg>
        <svg className="ml-1 h-3.5 w-3.5" viewBox="0 0 14 14" fill="none" stroke="#ccd6d3" aria-hidden="true"><path d="M1 5h2l3-3v10L3 9H1Z" fill="#ccd6d3" /><path d="M8 5q1.500 2 0 4M10 3.500q2.500 3.500 0 7M12 2q3 5 0 10" /></svg>
        <svg className="ml-1 h-[18px] w-[18px]" viewBox="0 0 18 18" aria-hidden="true"><path d="M9 .5q4 2 8 2 .5 11-8 15Q.5 13.500 1 2.500q4 0 8-2Z" fill="#eee" stroke="#999" strokeWidth=".6" /><circle cx="9" cy="8.500" r="5.500" fill="#2f62b5" /><path d="M9 7.500v4.500M9 4.500v1.800" stroke="#fff" strokeWidth="1.800" /></svg>
        <time className="ml-2 font-bold whitespace-nowrap text-[#dbe2e0] [text-shadow:0_1px_1px_#000]">8:34 AM</time>
      </div>
    </div>
  );
}

export default function App() {
  return (
    <div className="flex h-screen flex-col overflow-hidden bg-[#8a8a8a] font-['DejaVu_Sans',sans-serif] text-[12px] leading-[15px] text-[#303030]">
      <SharedDefs />
      <div className="flex min-h-0 flex-1">
        <FileWindow
          path="/home/booman/.PlayOnLinux/wineprefix/quake4/drive_c/Program Files/id Software/Quake 4/q4base"
          files={leftFiles}
          status="41 items, Free space: 51.7 GB"
        />
        <FileWindow
          inactive
          scrollbar
          path="/home/booman/quake/q4base"
          files={rightFiles}
          status="The 18 selected items will be copied if you select the Paste command"
        />
      </div>
      <Taskbar />
    </div>
  );
}
